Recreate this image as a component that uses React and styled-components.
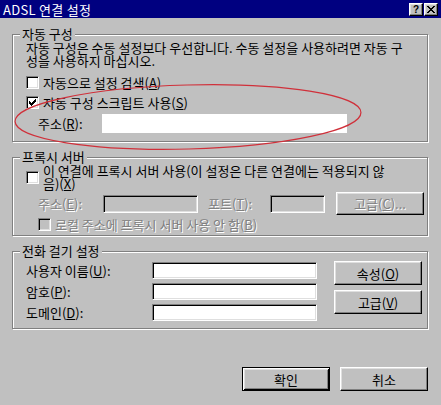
import React from 'react';
import styled, { createGlobalStyle, css } from 'styled-components';

const GlobalStyle = createGlobalStyle`
  html, body {
    margin: 0;
    padding: 0;
    background: #c0c0c0;
  }
  body {
    font-family: "Noto Sans CJK KR", "Noto Sans", sans-serif;
    font-size: 13px;
    color: #000;
  }
  * {
    box-sizing: border-box;
  }
`;

const sunken = css`
  border: 1px solid;
  border-color: #808080 #fff #fff #808080;
  box-shadow: inset 1px 1px 0 #000, inset -1px -1px 0 #dfdfdf;
`;

const raised = css`
  border: 1px solid;
  border-color: #fff #000 #000 #fff;
  box-shadow: inset -1px -1px 0 #808080, inset 1px 1px 0 #dfdfdf;
`;

const disabledText = css`
  color: #808080;
  text-shadow: 1px 1px 0 #fff;
`;

export const Window = styled.div`
  position: relative;
  width: 441px;
  height: 405px;
  background: #c0c0c0;
  overflow: hidden;
  display: flex;
  flex-direction: column;
`;

export const TitleBar = styled.div`
  height: 18px;
  display: flex;
  align-items: center;
  padding: 0 3px 0 3px;
  background: #000080;
  color: #fff;
`;

export const Title = styled.div`
  flex: 1;
  font-size: 13px;
  line-height: 12px;
  padding-top: 1px;
  letter-spacing: 0.3px;
`;

export const CaptionButtons = styled.div`
  display: flex;
  gap: 1px;
  margin-top: 1px;
`;

export const CaptionButton = styled.div`
  ${raised};
  width: 14px;
  height: 13px;
  background: #c0c0c0;
  color: #000;
  display: flex;
  align-items: center;
  justify-content: center;
  font-family: "Liberation Sans", sans-serif;
  font-weight: bold;
  font-size: 10px;
  line-height: 10px;
`;

export const Body = styled.div`
  display: flex;
  flex-direction: column;
  padding: 10px 13px 0 12px;
`;

export const Group = styled.fieldset`
  margin: ${p => p.$mt || 0}px 0 0 0;
  padding: 0;
  min-width: 0;
  border: 1px solid #808080;
  box-shadow: inset 1px 1px 0 #fff, 1px 1px 0 #fff;
`;

export const Legend = styled.legend`
  margin-left: 7px;
  padding: 0 2px;
  font-size: 13px;
  line-height: 12px;
  background: #c0c0c0;
`;

export const GroupBody = styled.div`
  display: ${p => (p.$row ? 'flex' : 'block')};
  gap: ${p => p.$gap || 0}px;
  padding: ${p => p.$pad};
`;

export const Note = styled.div`
  max-width: 384px;
  line-height: 13px;
`;

export const CheckRow = styled.div`
  display: flex;
  align-items: center;
  gap: 4px;
  min-height: 16px;
  margin-top: ${p => p.$mt || 0}px;
  padding-left: ${p => p.$indent || 0}px;
`;

export const CheckBox = styled.span`
  ${sunken};
  flex: none;
  width: 13px;
  height: 13px;
  background: ${p => (p.$disabled ? '#c0c0c0' : '#fff')};
  display: flex;
  align-items: center;
  justify-content: center;
`;

export const CheckLabel = styled.span`
  line-height: 13px;
  max-width: ${p => (p.$max ? `${p.$max}px` : 'none')};
  ${p => p.$disabled && disabledText};
`;

export const FieldRow = styled.div`
  display: flex;
  align-items: center;
  margin-top: ${p => p.$mt || 0}px;
  padding-left: ${p => p.$indent || 0}px;
  height: ${p => (p.$h ? `${p.$h}px` : 'auto')};
`;

export const FieldLabel = styled.span`
  flex: none;
  width: ${p => p.$w}px;
  margin-left: ${p => p.$ml || 0}px;
  line-height: 13px;
  ${p => p.$disabled && disabledText};
`;

export const TextField = styled.div`
  ${sunken};
  flex: none;
  width: ${p => p.$w}px;
  height: ${p => p.$h || 18}px;
  background: ${p => (p.$disabled ? '#c0c0c0' : '#fff')};
`;

export const BlankField = styled.div`
  flex: none;
  width: ${p => p.$w}px;
  height: ${p => p.$h}px;
  background: #fff;
`;

export const PushButton = styled.button`
  ${raised};
  flex: none;
  width: ${p => p.$w || 88}px;
  height: ${p => p.$h || 24}px;
  margin: 0 0 0 ${p => p.$ml || 0}px;
  padding: 0;
  background: #c0c0c0;
  font: inherit;
  font-size: 13px;
  line-height: 13px;
  color: #000;
  ${p => p.disabled && disabledText};
  ${p =>
    p.$default &&
    css`
      border: 1px solid #000;
      box-shadow: inset 1px 1px 0 #fff, inset -1px -1px 0 #000,
        inset 2px 2px 0 #dfdfdf, inset -2px -2px 0 #808080;
    `};
`;

export const FieldsColumn = styled.div`
  display: flex;
  flex-direction: column;
  gap: 4px;
  padding-top: 1px;
`;

export const ButtonsColumn = styled.div`
  display: flex;
  flex-direction: column;
  gap: 5px;
`;

export const Footer = styled.div`
  display: flex;
  justify-content: flex-end;
  gap: 10px;
  margin-top: 38px;
`;

export const Annotation = styled.svg`
  position: absolute;
  left: 0;
  top: 0;
  pointer-events: none;
`;

const Check = () => (
  <svg width="7" height="7" viewBox="0 0 7 7" shapeRendering="crispEdges">
    <path
      d="M6 0h1v3h-1v1h-1v1h-1v1h-1v1h-1v-1h-1v-1h-1v-3h1v1h1v1h1v-1h1v-1h1z"
      fill="#000"
    />
  </svg>
);

const CloseGlyph = () => (
  <svg width="8" height="7" viewBox="0 0 8 7" shapeRendering="crispEdges">
    <path
      d="M0 0h2v1h1v1h2v-1h1v-1h2v1h-1v1h-1v1h-1v1h1v1h1v1h1v1h-2v-1h-1v-1h-2v1h-1v1h-2v-1h1v-1h1v-1h1v-1h-1v-1h-1v-1h-1z"
      fill="#000"
    />
  </svg>
);

export default function App() {
  return (
    <>
      <GlobalStyle />
      <Window>
        <TitleBar>
          <Title>ADSL 연결 설정</Title>
          <CaptionButtons>
            <CaptionButton>?</CaptionButton>
            <CaptionButton>
              <CloseGlyph />
            </CaptionButton>
          </CaptionButtons>
        </TitleBar>

        <Body>
          <Group>
            <Legend>자동 구성</Legend>
            <GroupBody $pad="1px 14px 8px 13px">
              <Note>
                자동 구성은 수동 설정보다 우선합니다. 수동 설정을 사용하려면 자동 구성을 사용하지 마십시오.
              </Note>
              <CheckRow $mt={7}>
                <CheckBox />
                <CheckLabel>
                  자동으로 설정 검색(<u>A</u>)
                </CheckLabel>
              </CheckRow>
              <CheckRow $mt={4}>
                <CheckBox>
                  <Check />
                </CheckBox>
                <CheckLabel>
                  자동 구성 스크립트 사용(<u>S</u>)
                </CheckLabel>
              </CheckRow>
              <FieldRow $mt={4} $indent={12}>
                <FieldLabel $w={64}>
                  주소(<u>R</u>):
                </FieldLabel>
                <BlankField $w={245} $h={19} />
              </FieldRow>
            </GroupBody>
          </Group>

          <Group $mt={9}>
            <Legend>프록시 서버</Legend>
            <GroupBody $pad="1px 4px 3px 13px">
              <CheckRow>
                <CheckBox />
                <CheckLabel $max={352}>
                  이 연결에 프록시 서버 사용(이 설정은 다른 연결에는 적용되지 않음)(<u>X</u>)
                </CheckLabel>
              </CheckRow>
              <FieldRow $mt={2} $indent={12} $h={23}>
                <FieldLabel $w={65} $disabled>
                  주소(<u>E</u>):
                </FieldLabel>
                <TextField $w={95} $disabled />
                <FieldLabel $w={62} $ml={10} $disabled>
                  포트(<u>T</u>):
                </FieldLabel>
                <TextField $w={55} $disabled />
                <PushButton $w={88} $h={23} $ml={11} disabled>
                  고급(<u>C</u>)...
                </PushButton>
              </FieldRow>
              <CheckRow $mt={1} $indent={12}>
                <CheckBox $disabled />
                <CheckLabel $disabled>
                  로컬 주소에 프록시 서버 사용 안 함(<u>B</u>)
                </CheckLabel>
              </CheckRow>
            </GroupBody>
          </Group>

          <Group $mt={9}>
            <Legend>전화 걸기 설정</Legend>
            <GroupBody $row $gap={17} $pad="4px 4px 7px 13px">
              <FieldsColumn>
                <FieldRow>
                  <FieldLabel $w={126}>
                    사용자 이름(<u>U</u>):
                  </FieldLabel>
                  <TextField $w={165} $h={17} />
                </FieldRow>
                <FieldRow>
                  <FieldLabel $w={126}>
                    암호(<u>P</u>):
                  </FieldLabel>
                  <TextField $w={165} $h={17} />
                </FieldRow>
                <FieldRow>
                  <FieldLabel $w={126}>
                    도메인(<u>D</u>):
                  </FieldLabel>
                  <TextField $w={165} $h={17} />
                </FieldRow>
              </FieldsColumn>
              <ButtonsColumn>
                <PushButton>
                  속성(<u>O</u>)
                </PushButton>
                <PushButton>
                  고급(<u>V</u>)
                </PushButton>
              </ButtonsColumn>
            </GroupBody>
          </Group>

          <Footer>
            <PushButton $default>확인</PushButton>
            <PushButton>취소</PushButton>
          </Footer>
        </Body>

        <Annotation width="441" height="405" viewBox="0 0 441 405">
          <ellipse
            cx="188"
            cy="117"
            rx="173"
            ry="32"
            transform="rotate(-1.5 188 117)"
            fill="none"
            stroke="#d0303a"
            strokeWidth="1.2"
          />
        </Annotation>
      </Window>
    </>
  );
}
